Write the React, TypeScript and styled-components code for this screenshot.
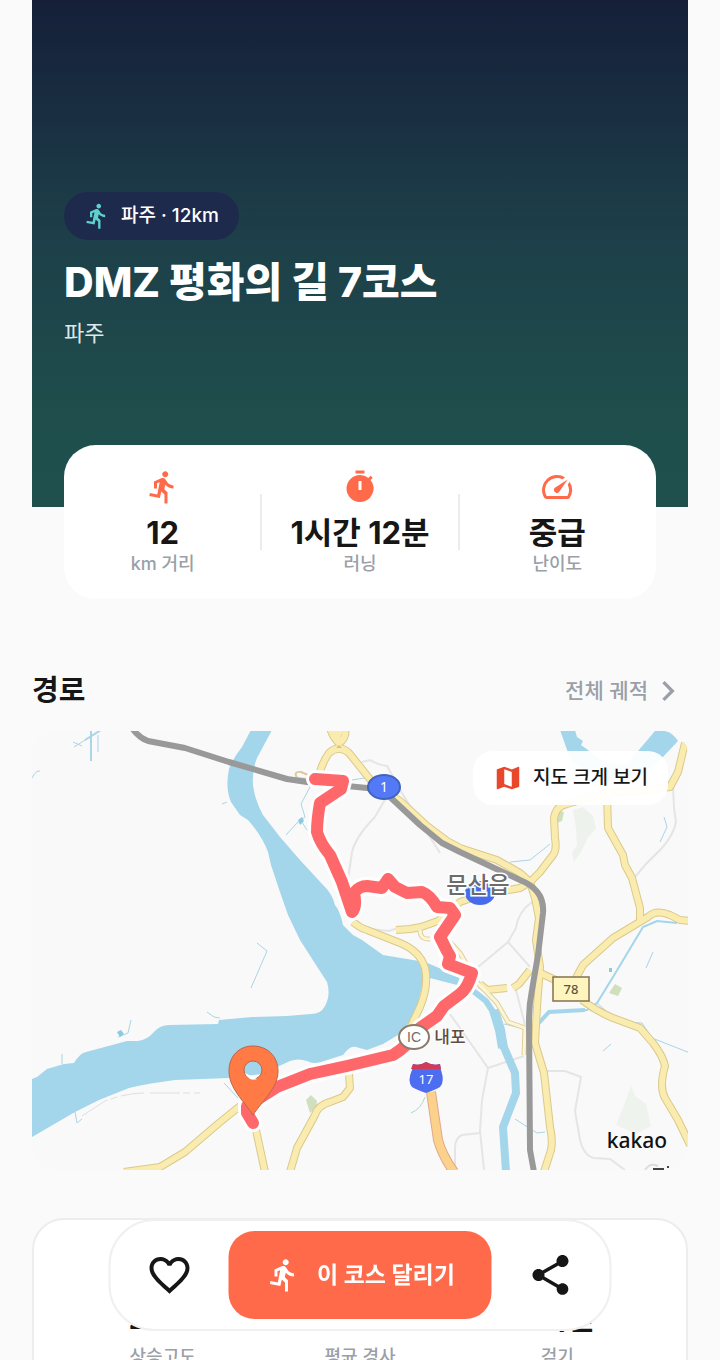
import React from "react";
import styled, { createGlobalStyle } from "styled-components";
import {
  MdChevronRight,
  MdDirectionsRun,
  MdFavoriteBorder,
  MdMap,
  MdShare,
  MdSpeed,
  MdTimer,
} from "react-icons/md";

const GlobalStyle = createGlobalStyle`
  *, *::before, *::after { box-sizing: border-box; }
  body {
    margin: 0;
    background: #fafafa;
    color: #161616;
    font-family: Inter, "Noto Sans CJK KR", sans-serif;
  }
  button, a { font: inherit; color: inherit; }
  button { border: 0; padding: 0; cursor: pointer; }
  h1, h2, p, dl, dd, dt { margin: 0; }
  svg { display: block; flex: none; }
`;

const Screen = styled.div`
  height: 100vh;
  overflow-y: auto;
  scrollbar-width: none;
  padding: 0 32px;
`;

const Hero = styled.header`
  display: flex;
  flex-direction: column;
  align-items: flex-start;
  padding: 192px 32px 158px;
  background: linear-gradient(180deg, #151f39 0%, #1d3f49 46%, #1f4f4c 85%, #1f504c 100%);
  color: #fff;
`;

const Badge = styled.span`
  display: flex;
  align-items: center;
  gap: 10px;
  height: 48px;
  padding: 0 20px 0 19px;
  border-radius: 24px;
  background: #1e2a4c;
  font-size: 19px;
  line-height: 32px;
  font-weight: 500;
  svg { color: #5fd0cb; }
`;

const Title = styled.h1`
  margin-top: 12px;
  font-size: 41px;
  line-height: 60px;
  font-weight: 800;
  white-space: nowrap;
`;

const Region = styled.p`
  margin-top: 5px;
  font-size: 22px;
  line-height: 32px;
  color: #dfe7e8;
`;

const StatsCard = styled.dl`
  position: relative;
  display: grid;
  grid-template-columns: repeat(3, 1fr);
  margin: -62px 32px 0;
  padding: 24px 0 22px;
  border-radius: 32px;
  background: #fff;
`;

const Stat = styled.div<{ $divided?: boolean }>`
  display: flex;
  flex-direction: column;
  align-items: center;
  position: relative;
  color: #ff6b4a;

  & + &::before {
    content: "";
    display: ${(p) => (p.$divided ? "block" : "none")};
    position: absolute;
    left: -1px;
    top: 25px;
    width: 2px;
    height: 56px;
    background: #ececee;
  }
`;

const StatValue = styled.dd`
  order: 1;
  margin-top: 10px;
  font-size: 31px;
  line-height: 36px;
  font-weight: 700;
  color: #161616;
  white-space: nowrap;
`;

const StatLabel = styled.dt`
  order: 2;
  font-size: 18px;
  line-height: 26px;
  font-weight: 500;
  color: #9a9fa8;
`;

const SectionHead = styled.div`
  display: flex;
  align-items: center;
  justify-content: space-between;
  margin-top: 72px;
  height: 40px;
`;

const SectionTitle = styled.h2`
  font-size: 29px;
  line-height: 40px;
  font-weight: 700;
`;

const MoreLink = styled.a`
  display: flex;
  align-items: center;
  font-size: 21px;
  line-height: 32px;
  font-weight: 500;
  color: #9a9fa8;
  text-decoration: none;
`;

const MapFrame = styled.div`
  position: relative;
  margin-top: 20px;
  border-radius: 24px;
  overflow: hidden;
  background: #f9f9f9;
`;

const MapDrawing = styled.svg`
  width: 100%;
  height: auto;
`;

const ExpandButton = styled.button`
  position: absolute;
  top: 20px;
  right: 20px;
  display: flex;
  align-items: center;
  gap: 10px;
  height: 54px;
  padding: 0 20px;
  border-radius: 20px;
  background: rgba(255, 255, 255, 0.94);
  font-size: 19px;
  line-height: 32px;
  font-weight: 500;
  svg { color: #e8472c; }
`;

const DetailCard = styled.dl`
  display: grid;
  grid-template-columns: repeat(3, 1fr);
  margin-top: 48px;
  padding: 70px 30px 32px;
  border: 2px solid #ededee;
  border-radius: 32px;
  background: #fff;
  ${StatLabel} { margin-top: 8px; }
`;

const ActionBar = styled.nav`
  position: fixed;
  left: 50%;
  bottom: 29px;
  transform: translateX(-50%);
  display: flex;
  align-items: center;
  padding: 10px 0;
  border: 2px solid #f0f0f1;
  border-radius: 46px;
  background: #fff;
`;

const IconButton = styled.button`
  display: grid;
  place-items: center;
  width: 118px;
  height: 88px;
  background: transparent;
`;

const RunButton = styled.button`
  display: flex;
  align-items: center;
  justify-content: center;
  gap: 16px;
  width: 263px;
  height: 88px;
  border-radius: 26px;
  background: #ff6b4a;
  color: #fff;
  font-size: 23px;
  line-height: 32px;
  font-weight: 700;
  white-space: nowrap;
`;

const stats = [
  { icon: <MdDirectionsRun size={36} />, value: "12", label: "km 거리" },
  { icon: <MdTimer size={36} />, value: "1시간 12분", label: "러닝" },
  { icon: <MdSpeed size={36} />, value: "중급", label: "난이도" },
];

const details = [
  { value: "24m", label: "상승고도" },
  { value: "0.2%", label: "평균 경사" },
  { value: "3시간", label: "걷기" },
];

const riverPath =
  "M251 730 L242 747 Q232 760 229 769 Q225 788 231 802 L240 815 L248 820 Q262 836 268 852 L271 865 L280 892 L288 915 L300 940 L316 965 L327 982 Q331 995 325 1006 Q321 1014 311 1014 L287 1016 L252 1017 L219 1020 L218 1024 L169 1025 Q160 1025 154 1032 Q147 1040 138 1041 L127 1041 L86 1052 Q80 1053 74 1063 L64 1064 L47 1069 L37 1077 L32 1079 V1137 L75 1112 L99 1100 L129 1088 Q150 1083 175 1080 L229 1078 L262 1074 L290 1061 Q298 1058 307 1061 Q314 1065 324 1061 L343 1055 Q350 1045 356 1047 L367 1050 L383 1044 L398 1035 L410 1022 L417 1007 L423 983 L430 978 L457 985 L460 977 L425 962 L383 955 L362 940 L353 935 L343 925 Q340 911 335 905 Q332 893 323 885 L300 860 L280 837 L263 815 Q255 801 253 785 Q252 770 257 758 L272 730 Z";

const minorRoads = [
  "M362 762 L370 760 Q378 765 387 766 L402 793 L420 822 Q432 840 440 853",
  "M387 796 L375 817 Q356 836 352 852 L348 880",
  "M450 1014 L488 1068 L482 1100 L480 1131 L484 1170",
  "M480 1133 L462 1135 Q455 1138 455 1148 L455 1170",
  "M488 1068 L524 1056",
  "M544 1071 H565 L581 1077 L575 1111 L580 1140 Q584 1156 594 1158 L610 1159 L625 1170",
  "M673 787 L674 808 L676 822 Q674 834 662 848 L645 865 L635 877",
  "M532 902 Q518 912 516 928 L508 942 L478 967",
  "M508 942 L530 967",
  "M516 990 L525 1025",
  "M370 929 L389 931 L398 928",
];

const majorRoads = [
  "M330 728 Q333 738 339 743 Q347 738 345 728",
  "M319 777 Q321 764 329 753 Q339 744 349 753 L373 783 L400 801 L427 826 L447 841 L460 848 L497 860 L520 873 L530 882 L535 898 L539 918 L536 940 L540 967 L537 1007 L535 1043 L544 1073 L550 1127 Q553 1140 551 1150 L544 1172",
  "M530 882 L540 872 L553 855 Q557 850 555 838 L554 818 Q556 806 567 804 L605 793 L648 790 L670 787 L678 772 L685 743",
  "M607 793 L608 828 L623 855 L625 865 L632 878 L640 908 L640 923",
  "M690 921 L680 920 L670 915 Q656 909 648 917 L613 938 L583 965 L576 978",
  "M540 973 L560 982",
  "M582 1000 Q596 1011 613 1018 L640 1028 L653 1043 Q663 1056 665 1066 Q659 1087 665 1098 L678 1120 L690 1145",
  "M353 922 Q360 928 367 930 L400 943 Q420 951 425 968 Q429 985 420 1007 L411 1026",
  "M396 930 L410 929 L421 927 L438 921 L460 902 L480 895 L520 888 L530 882",
  "M124 1172 L160 1167 L185 1152 L219 1123 L240 1106",
  "M256 1130 L265 1172",
  "M349 1074 L350 1088 L343 1097 L330 1102 Q318 1105 315 1115 L297 1148 L290 1172",
  "M480 984 L487 990 L507 988",
  "M513 988 L519 984 L530 970",
];

const laneRoads = [
  "M420 930 Q420 940 430 939",
  "M447 939 L460 953 L477 982 L497 1003 L508 1022 L525 1028 L524 1055",
];

const streams = [
  "M91 731 V761",
  "M101 730 L74 747",
  "M98 735 V752",
  "M73 742 L82 746",
  "M32 778 Q36 770 40 771",
  "M222 804 L227 802",
  "M311 785 L301 804 L305 817 L296 824 L286 835",
  "M300 819 L307 830",
  "M257 943 L267 951 L251 988",
  "M62 1054 V1064",
  "M118 1037 L128 1033 L131 1020",
  "M207 1012 L214 1017 L220 1018",
  "M75 1112 L77 1123 L82 1119",
  "M224 1083 L238 1098",
  "M411 1113 Q421 1109 425 1097",
  "M510 862 L530 860 L550 844",
  "M664 817 L667 827 L660 842",
  "M504 1024 L526 1029",
  "M613 1018 Q626 1023 642 1023 L652 1038 L690 1053",
  "M597 1003 L613 1017",
  "M603 1051 L611 1044",
  "M646 968 L653 952",
  "M515 1119 L537 1133 L545 1132",
  "M352 780 L370 777",
];

const railPath =
  "M132 728 Q139 738 148 741 L185 748 L229 762 L287 779 L307 782 L367 788 Q380 790 390 797 L420 825 L442 843 L460 852 L520 880 Q545 890 543 913 L538 955 L532 990 Q529 1005 529 1020 L530 1150 L534 1172";

const trailPath =
  "M315 779 L343 781 L341 789 L320 803 Q317 820 317 832 Q320 843 330 855 L342 882 L352 912 Q357 907 354 893 Q359 886 367 886 L382 888 L388 879 L395 887 L407 893 L422 892 Q430 895 437 907 L450 908 L455 915 L440 937 L447 951 L450 956 L448 964 L472 973 Q468 988 460 994 L444 1006 L437 1016 L420 1028 Q407 1047 393 1055 L347 1066 L310 1074 L277 1087 L247 1106 L247 1113 L253 1123";

function RouteMap() {
  return (
    <MapDrawing viewBox="32 731 656 439" role="img" aria-label="파주 코스 지도">
      <rect x="32" y="730" width="656" height="440" fill="#f9f9f9" />
      <g fill="#e6ede4">
        <path d="M573 810 l10 -3 l10 9 l3 13 l-8 8 l-7 15 l-7 10 l-2 -9 l5 -8 l-1 -17 Z" opacity="0.6" />
        <path d="M631 1086 l4 10 l11 8 l5 22 l-15 8 l-20 -9 l8 -20 Z" opacity="0.5" />
      </g>
      <g fill="#d0dfbd">
        <path d="M306 1100 l5 -5 l6 6 l-1 7 l-6 5 Z" />
        <path d="M615 984 l7 4 l-4 8 l-9 -3 Z" />
        <path d="M557 811 l7 1 l-2 9 l-5 2 Z" />
      </g>
      <g fill="none" stroke="#e5e5e6" strokeWidth="2">
        {minorRoads.map((d) => <path key={d} d={d} />)}
      </g>
      <g fill="#a3d5eb">
        <path d={riverPath} />
        <path d="M560 730 H575 L577 737 L583 741 L581 745 L588 750 L603 762 L626 764 L638 751 L655 731 Q670 728 678 741 L662 758 L646 772 L623 781 L590 773 L571 761 Z" />
      </g>
      <g fill="none" stroke="#a3d5eb">
        <path d="M472 990 L486 1001 L497 1018" strokeWidth="6" />
        <path d="M494 1010 L500 1030 L503 1048" strokeWidth="10" />
        <path d="M503 1045 L515 1073 L516 1093 L503 1127 L506 1172" strokeWidth="8" />
        <path d="M538 1024 L549 1012 L587 1010 L597 1003 L613 977 L643 927 L657 921 L677 923" strokeWidth="2" />
        <path d="M538 1024 L549 1012 L585 1010" strokeWidth="4" />
      </g>
      <g fill="none" stroke="#a9d5e5" strokeWidth="1">
        {streams.map((d) => <path key={d} d={d} />)}
        <path d="M91 731 V761 M101 730 L85 740" strokeWidth="2" />
        <path d="M82 1116 L105 1101 Q126 1093 144 1093 M150 1093 H200" stroke="#dde0e1" strokeDasharray="30 3 7 4" />
      </g>
      <path d="M117 1032 l4 -2 l3 4 l-4 3 Z M298 820 l4 -3 l2 4 l-4 4 Z M609 968 h3 v4 h-3 Z" fill="#8fc9df" />
      <g fill="none" strokeLinejoin="round">
        {majorRoads.map((d) => <path key={d} d={d} stroke="#dac98c" strokeWidth="8" />)}
        {laneRoads.map((d) => <path key={d} d={d} stroke="#dfcf98" strokeWidth="5" />)}
        {majorRoads.map((d) => <path key={d} d={d} stroke="#faecaf" strokeWidth="6" />)}
        {laneRoads.map((d) => <path key={d} d={d} stroke="#fcf5d8" strokeWidth="3" />)}
        <path d="M307 779 L297 778 Q293 771 301 772 L308 775" stroke="#dec99a" strokeWidth="2" />
        <path d="M333 731 L339 741 L343 731 Z" fill="#faecaf" />
        <path d="M336 748 l3 -3 l3 3 Z" fill="#d5c27c" />
        <path d="M431 1092 L438 1140 Q442 1155 454 1172" stroke="#e2a889" strokeWidth="10" />
        <path d="M431 1092 L438 1140 Q442 1155 454 1172" stroke="#fbd18c" strokeWidth="8" />
        <path d={railPath} stroke="#999" strokeWidth="6" />
      </g>
      <ellipse cx="384" cy="787" rx="16" ry="12" fill="#5479f7" stroke="#4162bd" strokeWidth="2" />
      <text x="384" y="792" textAnchor="middle" fontFamily="Noto Sans, sans-serif" fontSize="14" fill="#fff">1</text>
      <ellipse cx="480" cy="893" rx="15" ry="12" fill="#476bea" />
      <g fill="none" strokeLinecap="round" strokeLinejoin="round">
        <path d={trailPath} stroke="#fff" strokeWidth="18" />
        <path d={trailPath} stroke="#ff686b" strokeWidth="12" />
      </g>
      <text x="478" y="893" textAnchor="middle" fontFamily="Noto Sans CJK KR, sans-serif" fontSize="23" fontWeight="500" fill="#6c6c6c" stroke="#fff" strokeWidth="3" paintOrder="stroke">문산읍</text>
      <ellipse cx="414" cy="1037" rx="15" ry="12" fill="#fff" stroke="#8c7a69" strokeWidth="2" />
      <text x="414" y="1042" textAnchor="middle" fontFamily="Liberation Sans, sans-serif" fontSize="14" fill="#776a60">IC</text>
      <text x="450" y="1043" textAnchor="middle" fontFamily="Noto Sans CJK KR, sans-serif" fontSize="17" fontWeight="500" fill="#604d42" stroke="#fff" strokeWidth="2" paintOrder="stroke">내포</text>
      <path d="M413 1064 Q420 1066 426 1062 Q433 1066 440 1064 L441 1070 Q445 1082 440 1087 Q435 1090 426 1093 Q417 1090 412 1087 Q407 1081 412 1070 Z" fill="#4d6df0" />
      <path d="M413 1064 Q420 1066 426 1062 Q433 1066 440 1064 L441 1069 H411 Z" fill="#d13b55" />
      <text x="426" y="1084" textAnchor="middle" fontFamily="Noto Sans, sans-serif" fontSize="13" fill="#fff">17</text>
      <rect x="553" y="977" width="36" height="24" fill="#fff6bf" stroke="#84704f" strokeWidth="1.5" />
      <text x="571" y="994" textAnchor="middle" fontFamily="Noto Sans, sans-serif" fontSize="13" fontWeight="500" fill="#5d553c">78</text>
      <path fillRule="evenodd" d="M253 1046 C239 1046 229 1056 229 1071 C229 1088 243 1100 253 1115 C263 1100 278 1088 278 1071 C278 1056 267 1046 253 1046 Z M253 1061 a9 9 0 1 1 0 18 a9 9 0 1 1 0 -18 Z" fill="#ff7a45" stroke="#b8674c" strokeWidth="1" />
      <path d="M245 1073 a9 9 0 0 0 12 6 Z" fill="#fff" />
      <text x="637" y="1148" textAnchor="middle" fontFamily="Noto Sans, sans-serif" fontSize="21" fontWeight="500" fill="#111">kakao</text>
      <path d="M653 1169 h11 M667 1167 h2" stroke="#444" strokeWidth="2" />
      <path d="M645 1170 Q650 1162 658 1166" stroke="#ddd" strokeWidth="2" fill="none" />
    </MapDrawing>
  );
}

export default function App() {
  return (
    <>
      <GlobalStyle />
      <Screen>
        <Hero>
          <Badge>
            <MdDirectionsRun size={28} />
            파주 · 12km
          </Badge>
          <Title>DMZ 평화의 길 7코스</Title>
          <Region>파주</Region>
        </Hero>
        <StatsCard>
          {stats.map((item) => (
            <Stat key={item.label} $divided>
              {item.icon}
              <StatLabel>{item.label}</StatLabel>
              <StatValue>{item.value}</StatValue>
            </Stat>
          ))}
        </StatsCard>
        <main>
          <SectionHead>
            <SectionTitle>경로</SectionTitle>
            <MoreLink href="#route">
              전체 궤적
              <MdChevronRight size={40} />
            </MoreLink>
          </SectionHead>
          <MapFrame id="route">
            <RouteMap />
            <ExpandButton type="button">
              <MdMap size={30} />
              지도 크게 보기
            </ExpandButton>
          </MapFrame>
          <DetailCard>
            {details.map((item) => (
              <Stat key={item.label}>
                <StatLabel>{item.label}</StatLabel>
                <StatValue>{item.value}</StatValue>
              </Stat>
            ))}
          </DetailCard>
        </main>
      </Screen>
      <ActionBar>
        <IconButton type="button" aria-label="찜하기">
          <MdFavoriteBorder size={48} />
        </IconButton>
        <RunButton type="button">
          <MdDirectionsRun size={36} />
          이 코스 달리기
        </RunButton>
        <IconButton type="button" aria-label="공유하기">
          <MdShare size={48} />
        </IconButton>
      </ActionBar>
    </>
  );
}
